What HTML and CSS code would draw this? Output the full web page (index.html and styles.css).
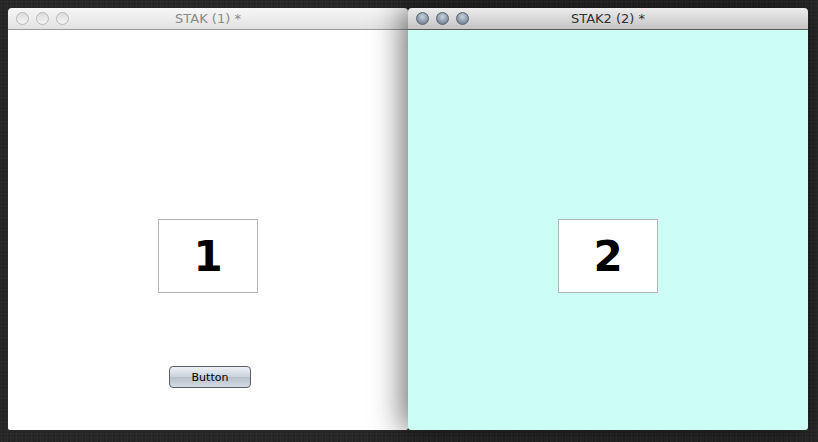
FILE: index.html
```html
<!DOCTYPE html>
<html lang="en">
<head>
    <meta charset="UTF-8">
    <title>STAK</title>
    <link rel="stylesheet" href="styles.css">
</head>
<body>
    <div class="desktop">
        <div class="window inactive">
            <div class="titlebar">
                <div class="lights">
                    <span class="light"></span>
                    <span class="light"></span>
                    <span class="light"></span>
                </div>
                <div class="title">STAK (1) *</div>
            </div>
            <div class="content">
                <div class="card">1</div>
                <button class="mac-btn">Button</button>
            </div>
        </div>
        <div class="window active">
            <div class="titlebar">
                <div class="lights">
                    <span class="light"></span>
                    <span class="light"></span>
                    <span class="light"></span>
                </div>
                <div class="title">STAK2 (2) *</div>
            </div>
            <div class="content cyan">
                <div class="card">2</div>
            </div>
        </div>
    </div>
</body>
</html>
```

FILE: styles.css
```css
html, body {
    margin: 0;
    padding: 0;
}
body {
    width: 818px;
    height: 442px;
    overflow: hidden;
    background-color: #272727;
    background-image:
        radial-gradient(rgba(255,255,255,0.04) 1px, transparent 1px),
        radial-gradient(rgba(0,0,0,0.2) 1px, transparent 1px);
    background-size: 3px 4px, 5px 3px;
    background-position: 0 0, 1px 2px;
    font-family: "DejaVu Sans", "Liberation Sans", sans-serif;
}
.desktop {
    display: flex;
    padding: 8px;
}
.window {
    width: 400px;
    height: 422px;
    display: flex;
    flex-direction: column;
    border-radius: 4px 4px 2px 2px;
    overflow: hidden;
    position: relative;
}
.window.active {
    z-index: 2;
    box-shadow: -6px 0 30px rgba(0, 0, 0, 0.55);
    overflow: visible;
}
.titlebar {
    height: 21px;
    border-bottom: 1px solid #8c8c8c;
    display: flex;
    align-items: center;
    position: relative;
    flex-shrink: 0;
}
.inactive .titlebar {
    background: linear-gradient(#f6f6f6, #e2e2e2);
    border-bottom-color: #9a9a9a;
}
.active .titlebar {
    background: linear-gradient(#ececec, #c4c4c4);
    border-bottom-color: #575757;
    border-radius: 4px 4px 0 0;
}
.lights {
    display: flex;
    gap: 7px;
    padding-left: 8px;
}
.light {
    width: 13px;
    height: 13px;
    border-radius: 50%;
    box-sizing: border-box;
}
.inactive .light {
    background: linear-gradient(#dcdcdc, #f4f4f4);
    border: 1px solid #b8b8b8;
}
.active .light {
    background: radial-gradient(circle at 50% 35%, #c9d3dd 0, #8d9cad 55%, #5f6e80 100%);
    border: 1px solid #5b6470;
}
.title {
    position: absolute;
    left: 0;
    right: 0;
    text-align: center;
    font-size: 13px;
    line-height: 21px;
}
.inactive .title {
    color: #8a8a8a;
}
.active .title {
    color: #333;
}
.content {
    flex: 1;
    background: #ffffff;
    display: flex;
    flex-direction: column;
    align-items: center;
    padding-top: 189px;
}
.content.cyan {
    background: #ccfef5;
    border-radius: 0 0 3px 3px;
}
.card {
    width: 98px;
    height: 72px;
    border: 1px solid #b3b3b3;
    background: #fff;
    display: flex;
    align-items: center;
    justify-content: center;
    font-size: 42px;
    font-weight: bold;
    color: #000;
}
.mac-btn {
    margin-top: 73px;
    margin-left: 4px;
    width: 82px;
    height: 22px;
    border: 1px solid #5c5f66;
    border-radius: 4px;
    background: linear-gradient(#eef1f5, #c9d1da 50%, #b6c0cb 51%, #d4dbe3);
    font-family: "DejaVu Sans", sans-serif;
    font-size: 11px;
    color: #000;
    padding: 0;
}
```
